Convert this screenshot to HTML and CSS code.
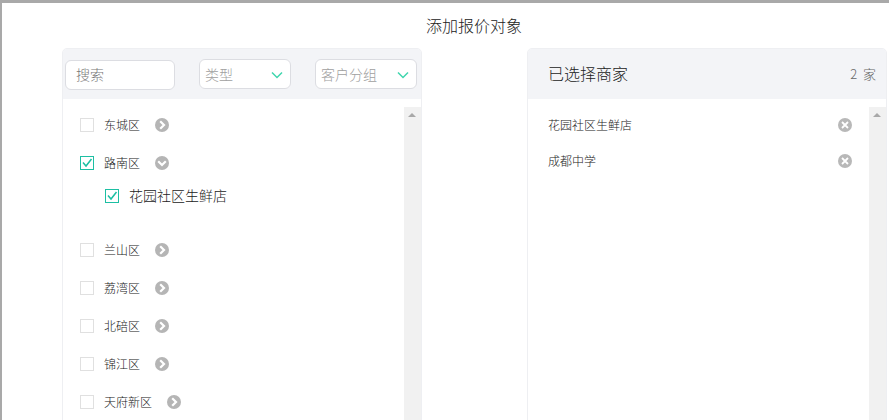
FILE: index.html
```html
<!DOCTYPE html>
<html lang="zh">
<head>
<meta charset="utf-8">
<title>添加报价对象</title>
<link rel="stylesheet" href="styles.css">
</head>
<body>
<svg class="defs" width="0" height="0" aria-hidden="true">
  <symbol id="right" viewBox="0 0 14 14"><circle cx="7" cy="7" r="7" fill="#b5b5b5"/><path d="M5.2 3.2 9 7l-3.8 3.8" fill="none" stroke="#fff" stroke-width="2.2"/></symbol>
  <symbol id="down" viewBox="0 0 14 14"><circle cx="7" cy="7" r="7" fill="#b5b5b5"/><path d="M3.2 5.2 7 9l3.8-3.8" fill="none" stroke="#fff" stroke-width="2.2"/></symbol>
  <symbol id="close" viewBox="0 0 14 14"><circle cx="7" cy="7" r="7" fill="#b8b8b8"/><path d="M4 4l6 6M10 4l-6 6" fill="none" stroke="#fff" stroke-width="1.8"/></symbol>
  <symbol id="chev" viewBox="0 0 12 8"><path d="M1 1.5 6 6.5l5-5" fill="none" stroke="#3fd6ae" stroke-width="1.5"/></symbol>
  <symbol id="tick" viewBox="0 0 14 14"><path d="M3 6.5 6 10l5.5-7" fill="none" stroke="#1dbfa3" stroke-width="1.5"/></symbol>
</svg>
<main class="modal">
  <h1 class="title">添加报价对象</h1>
  <div class="panels">
    <section class="panel">
      <header class="head filters">
        <div class="field search">搜索</div>
        <div class="field select type">类型<svg class="chev"><use href="#chev"/></svg></div>
        <div class="field select group">客户分组<svg class="chev"><use href="#chev"/></svg></div>
      </header>
      <div class="body">
        <ul class="list">
          <li class="row"><span class="box"></span><span class="name">东城区</span><svg class="ico"><use href="#right"/></svg></li>
          <li class="row"><span class="box on"><svg><use href="#tick"/></svg></span><span class="name">路南区</span><svg class="ico"><use href="#down"/></svg></li>
          <li class="child"><span class="box on"><svg><use href="#tick"/></svg></span><span class="childname">花园社区生鲜店</span></li>
          <li class="row"><span class="box"></span><span class="name">兰山区</span><svg class="ico"><use href="#right"/></svg></li>
          <li class="row"><span class="box"></span><span class="name">荔湾区</span><svg class="ico"><use href="#right"/></svg></li>
          <li class="row"><span class="box"></span><span class="name">北碚区</span><svg class="ico"><use href="#right"/></svg></li>
          <li class="row"><span class="box"></span><span class="name">锦江区</span><svg class="ico"><use href="#right"/></svg></li>
          <li class="row"><span class="box"></span><span class="name">天府新区</span><svg class="ico"><use href="#right"/></svg></li>
        </ul>
        <div class="scroll"><i class="arrow"></i></div>
      </div>
    </section>
    <section class="panel">
      <header class="head selected">
        <span class="sel-title">已选择商家</span>
        <span class="count">2 家</span>
      </header>
      <div class="body">
        <ul class="list picked">
          <li class="pick"><span class="pick-name">花园社区生鲜店</span><svg class="ico"><use href="#close"/></svg></li>
          <li class="pick"><span class="pick-name">成都中学</span><svg class="ico"><use href="#close"/></svg></li>
        </ul>
        <div class="scroll"><i class="arrow"></i></div>
      </div>
    </section>
  </div>
</main>
</body>
</html>
```
FILE: styles.css
```css
* { box-sizing: border-box; }
html, body { height: 100%; }
body {
  margin: 0;
  height: 420px;
  overflow: hidden;
  background: #a9a9a9;
  font-family: "Noto Sans CJK SC", "Noto Sans", sans-serif;
  font-weight: 300;
  color: #222;
}
.defs { position: absolute; }
ul { list-style: none; margin: 0; padding: 0; }
.modal {
  height: 417px;
  margin: 3px 0 0 2px;
  background: #fff;
  overflow: hidden;
}
.title {
  margin: 0;
  height: 45px;
  padding-top: 11px;
  padding-left: 57px;
  text-align: center;
  font-size: 16px;
  line-height: 22px;
  font-weight: 300;
  color: #222;
}
.panels {
  display: flex;
  justify-content: space-between;
  padding: 0 0 0 60px;
  width: 885px;
}
.panel {
  width: 360px;
  height: 400px;
  border: 1px solid #eeeff2;
  border-radius: 5px 5px 0 0;
  overflow: hidden;
}
.head {
  height: 50px;
  background: #f3f4f7;
  display: flex;
  align-items: center;
}
.filters { padding-left: 2px; }
.field {
  height: 30px;
  background: #fff;
  border: 1px solid #dcdde2;
  border-radius: 6px;
  font-size: 14px;
  line-height: 25px;
  color: #a0a0a0;
}
.search { width: 110px; padding-left: 10px; line-height: 27px; color: #777; margin-top: 1px; }
.select { display: flex; justify-content: space-between; align-items: center; padding: 0 7px 0 5px; }
.type { width: 92px; margin-left: 24px; }
.group { width: 102px; margin-left: 24px; }
.chev { width: 12px; height: 8px; margin-top: 1px; }
.body { display: flex; justify-content: space-between; padding-top: 8px; height: 350px; }
.list { margin-top: -1px; padding: 0 0 0 17px; flex: 1; }
.row { height: 38px; display: flex; align-items: center; font-size: 12px; }
.box {
  width: 14px;
  height: 14px;
  flex: none;
  border: 1px solid #e0e0e0;
  display: block;
}
.box.on { border-color: #1dbfa3; }
.box svg { display: block; width: 14px; height: 14px; margin: -1px; }
.name { margin-left: 10px; color: #222; line-height: 14px; padding-bottom: 1px; }
.ico { width: 14px; height: 14px; flex: none; }
.row .ico { margin-left: 15px; }
.child { height: 49px; display: flex; align-items: flex-start; padding-left: 25px; }
.child .box { margin-top: 7px; }
.childname { font-size: 14px; line-height: 26px; margin-left: 10px; color: #222; }
.scroll { width: 17px; flex: none; background: #f1f1f1; position: relative; }
.arrow {
  position: absolute;
  left: 4px;
  top: 6px;
  border-style: solid;
  border-width: 0 4px 4px;
  border-color: transparent transparent #a8a8a8;
}
.selected { justify-content: space-between; padding: 0 10px 0 20px; }
.sel-title { font-size: 16px; color: #222; line-height: 22px; padding-bottom: 2px; }
.count { font-size: 13px; color: #666; word-spacing: 3px; padding-bottom: 1px; }
.picked { margin-top: 0; padding: 0 0 0 20px; }
.pick {
  height: 36px;
  display: flex;
  align-items: center;
  justify-content: space-between;
  font-size: 12px;
  padding-right: 17px;
  color: #222;
}
.pick-name { line-height: 14px; padding-bottom: 1px; }
```
